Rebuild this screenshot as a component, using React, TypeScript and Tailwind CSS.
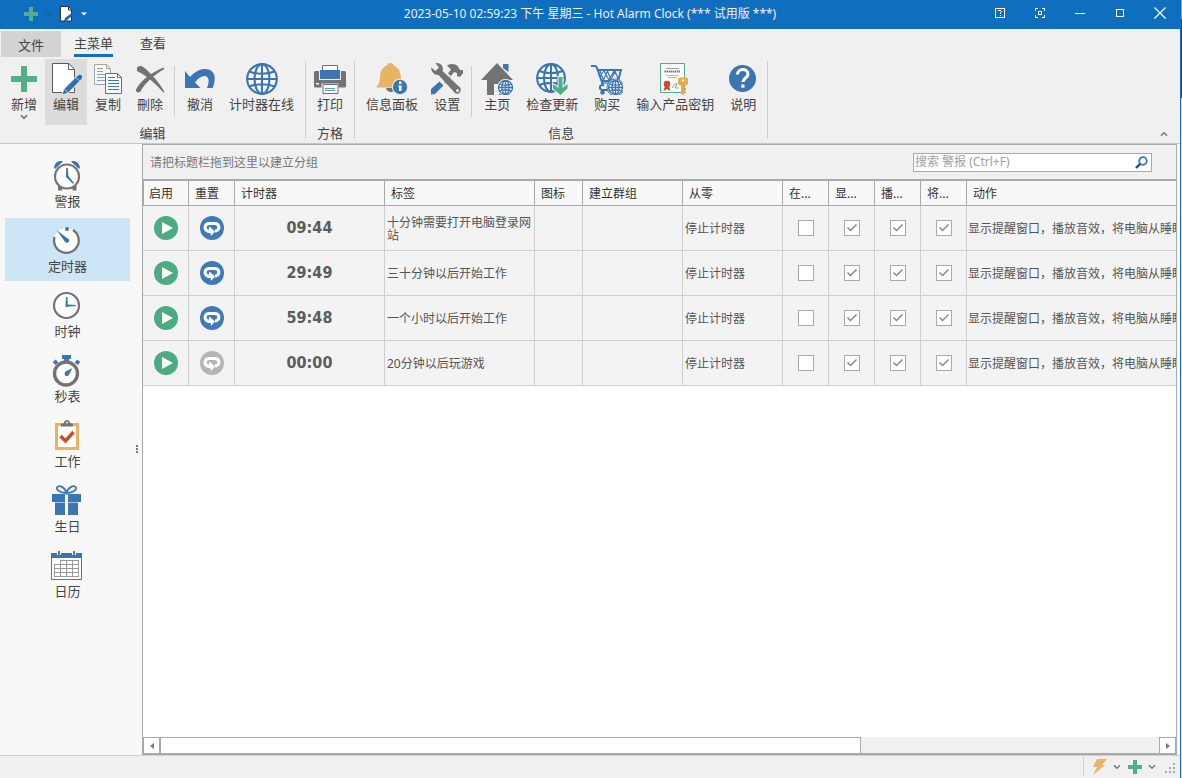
import React from "react";

type IconProps = { className?: string };

const BLUE = "#3b76b3";
const GRAY = "#737373";
const GREEN = "#55ae89";
const GOLD = "#e8b463";

function Plus({ className }: IconProps) {
  return (
    <svg viewBox="0 0 32 32" className={className} fill={GREEN}>
      <path d="M13 3h6v10h10v6H19v10h-6V19H3v-6h10z" />
    </svg>
  );
}

function PlusSmall({ className }: IconProps) {
  return (
    <svg viewBox="0 0 14 14" className={className} fill={GREEN}>
      <path d="M5 0h4v5h5v4H9v5H5V9H0V5h5z" />
    </svg>
  );
}

function Chevron({ className }: IconProps) {
  return (
    <svg viewBox="0 0 8 6" className={className} fill="none" stroke="currentColor" strokeWidth="1.5">
      <path d="M1 1.2 4 4.2 7 1.2" />
    </svg>
  );
}

function EditPage() {
  return (
    <svg viewBox="0 0 32 32" className="size-8">
      <path d="M2.500.5h16.500l5.500 6V29.500H2.500z" fill="#fff" stroke="#5a5a5a" />
      <path d="M18.500.5v6h6" fill="none" stroke="#5a5a5a" />
      <path
        d="M12.500 31.500l2-5.500L27.500 13c1-1 2-1.500 3.500-1 1.500 1 1.500 2.500.5 4L18 29.500z"
        fill="#2f6fb5"
        stroke="#e6e6e6"
        strokeWidth="2"
        paintOrder="stroke"
      />
      <path d="M14.500 26l3.500 3.500M26 14.500l3.500 3.500" stroke="#dce8f4" strokeWidth=".8" />
    </svg>
  );
}

function CopyPages() {
  return (
    <svg viewBox="0 0 32 32" className="size-8" fill="none">
      <path d="M2.500 1.500h12l4 4V21.500h-16z" fill="#f7f7f7" stroke="#a5a5a5" />
      <path d="M14.500 1.500v4h4" stroke="#a5a5a5" />
      <path d="M5 5.500h6M5 8.500h6M5 11.500h8M5 14.500h8M5 17.500h8" stroke="#7ea3cd" />
      <path d="M13.500 10.500h12l4 4V30.500h-16z" fill="#fff" stroke="#6f6f6f" />
      <path d="M25.500 10.500v4h4" stroke="#6f6f6f" />
      <path d="M16 14.500h7M16 17.500h11M16 20.500h11M16 23.500h11M16 26.500h11" stroke={BLUE} />
    </svg>
  );
}

function DeleteCross() {
  return (
    <svg viewBox="0 0 32 32" className="size-8" fill={GRAY}>
      <path d="M3 4.500C5 2.200 8 2.500 10 4.500c6 5 15 14 20.500 24.500l-1 .5C23 22.500 13 12.500 3 8z" />
      <path d="M30.500 6l-1-1.500C21 8 7 16 2 26.500c-.5 2.500 2 4 4.500 2C11 20 21 11 30.500 6z" />
    </svg>
  );
}

function UndoArrow() {
  return (
    <svg viewBox="0 0 32 32" className="size-8" fill={BLUE}>
      <path d="M1 8l5 6C11 8.500 16 6 21 6c7 0 10 4.500 9.700 10-.2 3.500-1 6.500-2 9H23c1.500-4 2.500-8 .5-10.500C21 11.500 15 13.500 11 19.500l5.500 5.500H1z" />
    </svg>
  );
}

function GlobeLines({ color = BLUE, w = 2.3 }: { color?: string; w?: number }) {
  return (
    <g fill="none" stroke={color} strokeWidth={w}>
      <circle cx="16" cy="16" r="14.800" fill="#fff" />
      <ellipse cx="16" cy="16" rx="7.500" ry="14.800" />
      <path d="M16 1v30M1.500 16h29M3.500 8.500c7 3 18 3 25 0M3.500 23.500c7-3 18-3 25 0" />
    </g>
  );
}

function Globe() {
  return (
    <svg viewBox="0 0 32 32" className="size-8">
      <GlobeLines w={2.2} />
    </svg>
  );
}

function Printer() {
  return (
    <svg viewBox="0 0 32 32" className="size-8">
      <path d="M0 10c0-2 1-2 2-2h28c1 0 2 .5 2 2v13c0 1-1 1.500-2 1.500H2c-1 0-2-.5-2-1.500z" fill={GRAY} />
      <path d="M5 8h22v9H5z" fill="#efefef" />
      <path d="M8.500 2.500h15v6h-15z" fill="#fff" stroke={GRAY} />
      <path d="M6 7h20v9H6z" fill={BLUE} />
      <path d="M7.500 20.500h17v11h-17z" fill="#efefef" />
      <path d="M9 21.500h15v9H9z" fill="#fff" stroke={GRAY} />
      <path d="M11 25.500h10M11 27.500h10" stroke="#6b96c6" />
      <path d="M2 20h3v1.500H2z" fill="#fff" />
    </svg>
  );
}

function BellInfo() {
  return (
    <svg viewBox="0 0 32 32" className="size-8">
      <path d="M10 25h9c0 5.500-8 5.500-9 0z" fill={GRAY} />
      <path d="M14.500 0c2 0 3 1 3.500 2.500 5 2 6.500 7 7 12 .5 4 2 6.500 3.500 10H0c3-3 3.500-5.500 4-10.500.5-6 2-9.500 7-11.500C11.500 1 12.500 0 14.500 0z" fill={GOLD} />
      <circle cx="24" cy="24" r="8.200" fill="#efefef" />
      <circle cx="24" cy="24" r="7.200" fill={BLUE} />
      <path d="M23 18.500h2.500V21H23zM22.500 22.500h3V28H23v-4h-.5z" fill="#fff" />
    </svg>
  );
}

function Tools() {
  return (
    <svg viewBox="0 0 32 32" className="size-8" fill={GRAY}>
      <path d="M16 2.500C20 .5 24 .5 27 3.500l2 3.500h3v3l-3 4-3-1V10l-3-1-3 4-3-2.500 3-4z" />
      <path d="M13.500 19.500L19 14" stroke={GRAY} strokeWidth="2.500" />
      <path d="M8.500 18.500l4 4-8.500 8.500-4 .5V26z" fill={BLUE} />
      <path
        d="M4.500.2C10-.8 13 4 11.500 8L29 24.500c2.500 3-1.500 8-5 5.500L7.500 12C3.500 12.500 0 9 .2 4.500L4.500 8 8 4.500z"
        stroke="#efefef"
        strokeWidth="1"
        paintOrder="stroke"
      />
      <circle cx="26.500" cy="27.500" r="1.500" fill="#efefef" />
    </svg>
  );
}

function MiniGlobe({ x, y, size }: { x: number; y: number; size: number }) {
  return (
    <g>
      <circle cx={x + size / 2} cy={y + size / 2} r={size / 2 + 1} fill="#efefef" />
      <svg x={x} y={y} width={size} height={size} viewBox="0 0 32 32">
        <GlobeLines w={2.8} />
      </svg>
    </g>
  );
}

function Home() {
  return (
    <svg viewBox="0 0 32 32" className="size-8">
      <path d="M22 1h5.500v8L22 5z" fill={BLUE} />
      <path d="M16 0l16 17h-6v15h-8V21h-5v11H6V17H0z" fill={GRAY} />
      <MiniGlobe x={17} y={17} size={15} />
    </svg>
  );
}

function GlobeDown() {
  return (
    <svg viewBox="0 0 32 32" className="size-8">
      <svg x="0" y="0" width="30" height="30" viewBox="0 0 32 32">
        <GlobeLines w={2.3} />
      </svg>
      <path
        d="M22.500 14h4v11l5-4v4.500L24.500 32l-7.500-6.500V21l5.500 4z"
        fill="#4fad86"
        stroke="#efefef"
        paintOrder="stroke"
        strokeWidth="2"
      />
    </svg>
  );
}

function Cart() {
  return (
    <svg viewBox="0 0 32 32" className="size-8" fill="none" stroke={BLUE}>
      <path d="M0 3h4c2 0 2 3 3 5l5 14c-4 0-4 4-1 5h6" strokeWidth="2" />
      <path d="M6 7h24l-3 11H11" strokeWidth="2" />
      <path d="M9 8l3.500 9 4-9 3.500 9 4-9 3.500 9M8 14l5-6 5 9 5-9 5 8" strokeWidth="1.100" />
      <path d="M10 20h17" strokeWidth="1.200" />
      <circle cx="11.500" cy="29.500" r="2.200" fill={BLUE} stroke="none" />
      <MiniGlobe x={17} y={17} size={15} />
    </svg>
  );
}

function Certificate() {
  return (
    <svg viewBox="0 0 32 32" className="size-8">
      <path d="M1.500.5h24v29h-24z" fill="#f3f8f5" stroke={GREEN} />
      <path d="M4 3h19v24H4z" fill="#fff" />
      <path d="M7 5.500h13" stroke="#999" />
      <path d="M5.500 8.500h16" stroke="#777" strokeWidth="2" strokeDasharray="1.500 .5" />
      <path d="M7 12.500h13M9 14.500h9" stroke="#bbb" />
      <path d="M13 25l4-5 1 1-2 4h4" stroke="#999" fill="none" />
      <circle cx="8" cy="21" r="3.300" fill="#cf4a31" />
      <path d="M6 23l-1.500 4.500 2-.5 1.500-1 1.500 1 2 .5L10 23z" fill="#cf4a31" />
      <path d="M19 15.500l1-1h8l1 1V21l-2 1.500h-1.500V31L24 32l-2-1v-8.500h-1L19 21z" fill="#e8ab48" />
      <path d="M25.500 25h1.500v2h-1.500zM25.500 28.500h1.500v1.500h-1.500z" fill="#e8ab48" />
      <circle cx="24" cy="17.500" r="1.200" fill="#fff" />
    </svg>
  );
}

function Help() {
  return (
    <svg viewBox="0 0 32 32" className="size-8">
      <circle cx="15.500" cy="15.500" r="13.500" fill={BLUE} />
      <path d="M10.500 11.500c0-6.500 10.500-6.500 10.500-.5 0 4-5 4-5 8" fill="none" stroke="#fff" strokeWidth="3" />
      <path d="M14.300 21.500h3.200v3.200h-3.200z" fill="#fff" />
    </svg>
  );
}

function AlarmIcon() {
  return (
    <svg viewBox="0 0 32 32" className="size-8">
      <path d="M3 7.500C4 2 8 0 12 1.500L4 9zM29 7.500C28 2 24 0 20 1.500L28 9z" fill={BLUE} />
      <path d="M9 26v4.500M23.500 26v4.500" stroke={GRAY} strokeWidth="4" />
      <circle cx="16" cy="16.500" r="12" fill="#fff" stroke={GRAY} strokeWidth="2.200" />
      <path d="M15.200 8h1.600l.6 8 5.600 7-1.200.8L15 17z" fill={BLUE} />
    </svg>
  );
}

function TimerIcon() {
  return (
    <svg viewBox="0 0 32 32" className="size-8">
      <circle cx="15.500" cy="15.500" r="12.500" fill="#fff" />
      <path d="M22 5a12.400 12.400 0 1 1-18.500 7" fill="none" stroke={GRAY} strokeWidth="2.200" />
      <path d="M5.500 5L18 14.500c1 2-1 4-3.500 3z" fill={BLUE} />
      <circle cx="16" cy="4" r="2" fill={BLUE} />
    </svg>
  );
}

function ClockIcon() {
  return (
    <svg viewBox="0 0 32 32" className="size-8">
      <circle cx="15.500" cy="15.500" r="12.500" fill="#fff" stroke={GRAY} strokeWidth="2.200" />
      <path d="M15 7h1.500l.3 7.500 8.200.5v1L14.500 17z" fill={BLUE} />
    </svg>
  );
}

function StopwatchIcon() {
  return (
    <svg viewBox="0 0 32 32" className="size-8">
      <path d="M11 0h9v4h-9z" fill={BLUE} />
      <path d="M3 8.500l3-2.500M28 8.500L25 6" stroke={BLUE} strokeWidth="4" />
      <path d="M13 4h5v3h-5z" fill={GRAY} />
      <circle cx="15" cy="18.500" r="11.500" fill="#fff" stroke={GRAY} strokeWidth="3.400" />
      <path d="M21.500 13l-4 7.500c-3 2-5-1-3-4z" fill={BLUE} />
    </svg>
  );
}

function TaskIcon() {
  return (
    <svg viewBox="0 0 32 32" className="size-8">
      <path d="M5.500 4.500h21v24h-21z" fill="#fff" stroke={GOLD} strokeWidth="3" />
      <path d="M10 6.500V4l3-1c0-4 6-4 6 0l3 1v2.500z" fill={GRAY} />
      <circle cx="16" cy="2.500" r="1" fill="#f8f8f8" />
      <path d="M9.500 16l5 5 8-9" fill="none" stroke="#cc4b31" strokeWidth="3.500" />
    </svg>
  );
}

function GiftIcon() {
  return (
    <svg viewBox="0 0 32 32" className="size-8">
      <path d="M15.500 8C10 8 5 5 6 2.500 8-.5 14 2 15.500 8 17 2 23-.5 25 2.500 26 5 21 8 15.500 8z" fill="none" stroke={BLUE} strokeWidth="1.800" />
      <path d="M1 9h29v8H1zM4 18h23v12H4z" fill={BLUE} />
      <path d="M4 17.500h23" stroke="#a9c4e0" />
      <path d="M14 9.500h3V30h-3z" fill="#fff" />
    </svg>
  );
}

function CalendarIcon() {
  return (
    <svg viewBox="0 0 32 32" className="size-8" shapeRendering="crispEdges">
      <path d="M.5 3.500h30v26H.5z" fill="#fff" stroke={GRAY} />
      <path d="M0 3h31v5H0z" fill={BLUE} />
      <path d="M6 1h4v4H6zM21 1h4v4h-4z" fill="#fff" />
      <path d="M7 1h2v4H7zM22 1h2v4h-2z" fill={GRAY} />
      <path d="M9.500 14.500v-4h18v16h-24v-12h24M3.500 18.500h24M3.500 22.500h24M9.500 10.500v16M15.500 10.500v16M21.500 10.500v16" fill="none" stroke="#9a9a9a" />
    </svg>
  );
}

function PlayIcon() {
  return (
    <svg viewBox="0 0 24 24" className="size-6">
      <circle cx="12" cy="12" r="12" fill="#4bab83" />
      <path d="M8 6l11 6-11 6z" fill="#fff" />
    </svg>
  );
}

function ResetIcon({ active }: { active: boolean }) {
  return (
    <svg viewBox="0 0 24 24" className="size-6">
      <circle cx="12" cy="12" r="12" fill={active ? "#4079b7" : "#b5b5b5"} />
      <path d="M8.500 15.300C3.500 14 4 7.500 9.500 7.500h5c5.500 0 6 6.500.5 7.800" fill="none" stroke="#fff" strokeWidth="3" />
      <path d="M9.500 10.500l5.500 5-4 4.500-.5-3H7.500l1-2.500z" fill="#fff" />
    </svg>
  );
}

type RibbonItem = { label: string; icon: React.ReactNode; active?: boolean; menu?: boolean } | "sep";
type RibbonGroup = { title: string; items: RibbonItem[] };

const ribbon: RibbonGroup[] = [
  {
    title: "编辑",
    items: [
      { label: "新增", icon: <Plus className="size-8" />, menu: true },
      { label: "编辑", icon: <EditPage />, active: true },
      { label: "复制", icon: <CopyPages /> },
      { label: "刪除", icon: <DeleteCross /> },
      "sep",
      { label: "撤消", icon: <UndoArrow /> },
      { label: "计时器在线", icon: <Globe /> },
    ],
  },
  { title: "方格", items: [{ label: "打印", icon: <Printer /> }] },
  {
    title: "信息",
    items: [
      { label: "信息面板", icon: <BellInfo /> },
      { label: "设置", icon: <Tools /> },
      "sep",
      { label: "主页", icon: <Home /> },
      { label: "检查更新", icon: <GlobeDown /> },
      { label: "购买", icon: <Cart /> },
      { label: "输入产品密钥", icon: <Certificate /> },
      { label: "说明", icon: <Help /> },
    ],
  },
];

const navItems = [
  { label: "警报", icon: <AlarmIcon /> },
  { label: "定时器", icon: <TimerIcon />, active: true },
  { label: "时钟", icon: <ClockIcon /> },
  { label: "秒表", icon: <StopwatchIcon /> },
  { label: "工作", icon: <TaskIcon /> },
  { label: "生日", icon: <GiftIcon /> },
  { label: "日历", icon: <CalendarIcon /> },
];

const headers = ["启用", "重置", "计时器", "标签", "图标", "建立群组", "从零", "在...", "显...", "播...", "将...", "动作"];

const timers = [
  { time: "09:44", tag: "十分钟需要打开电脑登录网站", running: true },
  { time: "29:49", tag: "三十分钟以后开始工作", running: true },
  { time: "59:48", tag: "一个小时以后开始工作", running: true },
  { time: "00:00", tag: "20分钟以后玩游戏", running: false },
];

function TitleBar() {
  return (
    <header className="flex h-[29px] shrink-0 items-center bg-[#106ebe] pb-[3px] text-[#f0f0f0]">
      <div className="flex flex-1 items-center pt-px pl-6">
        <button aria-label="新增">
          <PlusSmall className="size-[14px]" />
        </button>
        <button aria-label="新增选项" className="ml-[7px] text-[#2a5788]">
          <Chevron className="h-[6px] w-2" />
        </button>
        <button aria-label="编辑" className="ml-[7px]">
          <svg viewBox="0 0 14 16" className="h-4 w-[14px]">
            <path d="M.5.5h8l3 3.500V15H.5z" fill="#fff" stroke="#333" />
            <path d="M8.500.5V4h3" fill="none" stroke="#333" />
            <path d="M4 15l1-3 8-6v3l-7 6z" fill="#2561a5" />
          </svg>
        </button>
        <button aria-label="自定义工具栏" className="ml-[6px]">
          <svg viewBox="0 0 8 4" className="h-1 w-2" fill="#fff">
            <path d="M1 .5h6L4 3.500z" />
          </svg>
        </button>
      </div>
      <h1 className="pt-px pr-6 text-[12px]">2023-05-10 02:59:23 下午 星期三 - Hot Alarm Clock (*** 试用版 ***)</h1>
      <div className="flex flex-1 justify-end">
        <button aria-label="帮助" className="flex h-[26px] w-10 items-center justify-center">
          <svg viewBox="0 0 10 10" className="size-[10px]" fill="none" stroke="#fff" shapeRendering="crispEdges">
            <path d="M.5.5h9v9h-9z" />
            <path d="M3 2h3v1H3zM6 3h1v1H6zM5 4h1v2H5zM5 7h1v1H5z" fill="#fff" stroke="none" />
          </svg>
        </button>
        <button aria-label="全屏" className="flex h-[26px] w-10 items-center justify-center">
          <svg viewBox="0 0 10 10" className="size-[10px]" fill="none" stroke="#fff" shapeRendering="crispEdges">
            <path d="M.5 3V.5H3M7 .5h2.500V3M9.500 7v2.500H7M3 9.500H.5V7M3.500 3.500h3v3h-3z" />
          </svg>
        </button>
        <button aria-label="最小化" className="flex h-[26px] w-10 items-center justify-center">
          <svg viewBox="0 0 10 10" className="size-[10px]" stroke="#fff" shapeRendering="crispEdges">
            <path d="M0 5.500h10" />
          </svg>
        </button>
        <button aria-label="最大化" className="flex h-[26px] w-10 items-center justify-center">
          <svg viewBox="0 0 10 10" className="size-[10px]" fill="none" stroke="#fff" shapeRendering="crispEdges">
            <path d="M1.500 1.500h7v7h-7z" />
          </svg>
        </button>
        <button aria-label="关闭" className="flex h-[26px] w-10 items-center justify-center">
          <svg viewBox="0 0 12 12" className="size-3" stroke="#fff" strokeWidth="1.300">
            <path d="M.5.5l11 11M11.500.5l-11 11" />
          </svg>
        </button>
      </div>
    </header>
  );
}

function Ribbon() {
  return (
    <div className="shrink-0 border-b border-[#c6c6c6] bg-[#f0f0f0] text-[13px] text-[#444]">
      <div className="flex h-[30px] items-start pt-[2px]">
        <button className="ml-px h-[26px] w-[60px] bg-[#d3d3d3] pt-[2px] leading-6">文件</button>
        <button className="ml-[13px] h-[26px] border-b-[3px] border-[#106ebe] leading-6">主菜单</button>
        <button className="ml-[27px] h-[26px] border-b-[3px] border-transparent leading-6">查看</button>
      </div>
      <div className="relative flex h-[84px]">
        {ribbon.map((group) => (
          <section key={group.title} aria-label={group.title} className="flex">
            <div className="flex flex-col px-[3px]">
              <div className="flex h-[66px]">
                {group.items.map((item, i) =>
                  item === "sep" ? (
                    <div key={i} className="mt-[7px] mr-1 ml-[3px] h-[51px] w-px bg-[#cfcfcf]" />
                  ) : (
                    <button
                      key={i}
                      className={
                        item.active
                          ? "flex flex-col items-center bg-[#dcdcdc] px-[5px] pt-1"
                          : "flex flex-col items-center px-[5px] pt-1"
                      }
                    >
                      {item.icon}
                      <span className="px-[3px] leading-[18px] whitespace-nowrap">{item.label}</span>
                      {item.menu && <Chevron className="mt-px h-[6px] w-2 text-[#666]" />}
                    </button>
                  )
                )}
              </div>
              <div className="text-center leading-4">{group.title}</div>
            </div>
            <div className="mt-[2px] h-[78px] w-px bg-[#cfcfcf]" />
          </section>
        ))}
        <button aria-label="折叠功能区" className="absolute right-[11px] bottom-[6px] text-[#777]">
          <Chevron className="h-[6px] w-[10px] rotate-180" />
        </button>
      </div>
    </div>
  );
}

function Sidebar() {
  return (
    <div className="flex w-[142px] shrink-0 bg-[#f8f8f8]">
      <nav className="flex flex-1 flex-col gap-[2px] pt-[9px] pl-[5px] text-[13px] text-[#444]">
        {navItems.map((item) => (
          <button
            key={item.label}
            className={
              item.active
                ? "flex h-[63px] flex-col items-center bg-[#cde6f7] pt-[7px]"
                : "flex h-[63px] flex-col items-center pt-[7px]"
            }
          >
            <span className="mr-[2px]">{item.icon}</span>
            <span className="leading-[18px]">{item.label}</span>
          </button>
        ))}
      </nav>
      <div className="flex w-3 flex-col items-center justify-center gap-px pb-[2px] pl-[2px]">
        <i className="size-[2px] bg-[#777]" />
        <i className="size-[2px] bg-[#777]" />
        <i className="size-[2px] bg-[#777]" />
      </div>
    </div>
  );
}

function CheckCell({ label, checked }: { label: string; checked: boolean }) {
  return (
    <td className="border-r border-b border-[#cfcfcf] p-0">
      <div className="relative mx-auto size-4">
        <input
          type="checkbox"
          aria-label={label}
          defaultChecked={checked}
          className="peer block size-4 appearance-none border border-[#a9a9a9] bg-white"
        />
        <svg
          viewBox="0 0 16 16"
          className="pointer-events-none absolute inset-0 hidden size-4 peer-checked:block"
          fill="none"
          stroke="#888"
          strokeWidth="1.500"
        >
          <path d="M3.500 7.500l3 3 6-6" />
        </svg>
      </div>
    </td>
  );
}

function TimerTable() {
  return (
    <table className="w-full table-fixed border-separate border-spacing-0 text-left text-[12px]">
      <colgroup>
        <col className="w-[46px]" />
        <col className="w-[46px]" />
        <col className="w-[150px]" />
        <col className="w-[150px]" />
        <col className="w-12" />
        <col className="w-[100px]" />
        <col className="w-[100px]" />
        <col className="w-[46px]" />
        <col className="w-[46px]" />
        <col className="w-[46px]" />
        <col className="w-[46px]" />
        <col />
      </colgroup>
      <thead>
        <tr className="h-[25px] bg-[#f8f8f8] text-[#333]">
          {headers.map((h) => (
            <th
              key={h}
              className="border-r border-b border-[#a9a9a9] p-0 pt-[2px] pl-[6px] font-normal whitespace-nowrap first:border-l first:pl-[5px] last:border-r-0"
            >
              {h}
            </th>
          ))}
        </tr>
      </thead>
      <tbody>
        {timers.map((t) => (
          <tr key={t.time} className="h-[45px] bg-[#f3f3f3] text-[#555]">
            <td className="border-r border-b border-[#cfcfcf] p-0">
              <button aria-label="启用" className="mx-auto block">
                <PlayIcon />
              </button>
            </td>
            <td className="border-r border-b border-[#cfcfcf] p-0">
              <button aria-label="重置" className="mx-auto block">
                <ResetIcon active={t.running} />
              </button>
            </td>
            <td className="border-r border-b border-[#cfcfcf] p-0 text-center font-['DejaVu_Sans_Condensed','DejaVu_Sans',sans-serif] text-[16px] font-bold text-[#5c5c5c]">
              {t.time}
            </td>
            <td className="border-r border-b border-[#cfcfcf] p-0 pt-px pl-[2px] leading-[13px]">{t.tag}</td>
            <td className="border-r border-b border-[#cfcfcf]" />
            <td className="border-r border-b border-[#cfcfcf]" />
            <td className="border-r border-b border-[#cfcfcf] p-0 pt-[2px] pl-[2px]">停止计时器</td>
            <CheckCell label="在..." checked={false} />
            <CheckCell label="显..." checked />
            <CheckCell label="播..." checked />
            <CheckCell label="将..." checked />
            <td className="overflow-hidden border-b border-[#cfcfcf] p-0 pt-[2px] pl-px whitespace-nowrap">
              显示提醒窗口，播放音效，将电脑从睡眠
            </td>
          </tr>
        ))}
      </tbody>
    </table>
  );
}

function GridPanel() {
  return (
    <main className="mr-[3px] flex min-w-0 flex-1 flex-col border-x border-t border-b-2 border-[#a9a9a9] bg-white">
      <div className="flex h-9 shrink-0 items-center justify-between border-b-2 border-[#a9a9a9] bg-[#f0f0f0] pr-6 pl-[7px]">
        <span className="pt-[2px] text-[12px] text-[#777]">请把标题栏拖到这里以建立分组</span>
        <label className="flex h-[19px] w-[239px] items-center border border-[#a9a9a9] bg-white pr-[3px] pl-px">
          <input
            type="search"
            aria-label="搜索"
            placeholder="搜索 警报 (Ctrl+F)"
            className="min-w-0 flex-1 text-[12px] leading-4 outline-none placeholder:text-[#a0a0a0]"
          />
          <svg viewBox="0 0 13 13" className="size-[13px]" fill="none">
            <circle cx="8" cy="5" r="3.800" stroke="#3b76b3" strokeWidth="1.800" />
            <path d="M5.200 7.800L1 12" stroke="#1f4e9c" strokeWidth="2.400" />
          </svg>
        </label>
      </div>
      <div className="min-h-0 flex-1 overflow-hidden">
        <TimerTable />
      </div>
      <div className="flex h-4 shrink-0 bg-[#f0f0f0]">
        <button aria-label="向左" className="flex w-[17px] items-center justify-center border-x border-t border-[#a9a9a9] bg-white">
          <svg viewBox="0 0 4 6" className="h-[6px] w-1" fill="#777">
            <path d="M4 0v6L0 3z" />
          </svg>
        </button>
        <div className="flex flex-1">
          <div className="w-[70.2%] border-x border-t border-[#a9a9a9] bg-white" />
        </div>
        <button aria-label="向右" className="flex w-[17px] items-center justify-center border-x border-t border-[#a9a9a9] bg-white">
          <svg viewBox="0 0 4 6" className="h-[6px] w-1" fill="#777">
            <path d="M0 0v6l4-3z" />
          </svg>
        </button>
      </div>
    </main>
  );
}

function StatusBar() {
  return (
    <footer className="flex h-[23px] shrink-0 items-center justify-end border-t border-[#cfcfcf] bg-[#f0f0f0] pr-1 pb-px">
      <i className="mr-2 h-[19px] w-px bg-[#cfcfcf]" />
      <button aria-label="快速操作" className="mr-[6px]">
        <svg viewBox="0 0 15 16" className="h-4 w-[15px]" fill="#e8b463">
          <path d="M5 0h10l-5 6h3L1 16l4-8H1z" />
        </svg>
      </button>
      <button aria-label="快速操作选项" className="mr-[7px] text-[#777]">
        <Chevron className="h-[6px] w-2" />
      </button>
      <button aria-label="新增" className="mr-[6px]">
        <PlusSmall className="size-[14px]" />
      </button>
      <button aria-label="新增选项" className="mr-2 text-[#777]">
        <Chevron className="h-[6px] w-2" />
      </button>
      <svg viewBox="0 0 12 12" className="mt-[3px] size-3" fill="#ababab">
        <path d="M9 1h2v2H9zM5 5h2v2H5zM9 5h2v2H9zM1 9h2v2H1zM5 9h2v2H5zM9 9h2v2H9z" />
      </svg>
    </footer>
  );
}

export default function App() {
  return (
    <div className="flex h-screen overflow-hidden font-['Noto_Sans','Noto_Sans_CJK_SC',sans-serif]">
      <div className="flex min-w-0 flex-1 flex-col border-r border-[#106ebe] bg-[#f8f8f8]">
        <TitleBar />
        <Ribbon />
        <div className="flex min-h-0 flex-1">
          <Sidebar />
          <GridPanel />
        </div>
        <StatusBar />
      </div>
      <div className="flex w-px flex-col">
        <i className="h-[19px] bg-[#a0a0a0]" />
        <i className="h-[79px] bg-[#0a4a80]" />
        <i className="flex-1 bg-[#dce6ee]" />
      </div>
    </div>
  );
}
